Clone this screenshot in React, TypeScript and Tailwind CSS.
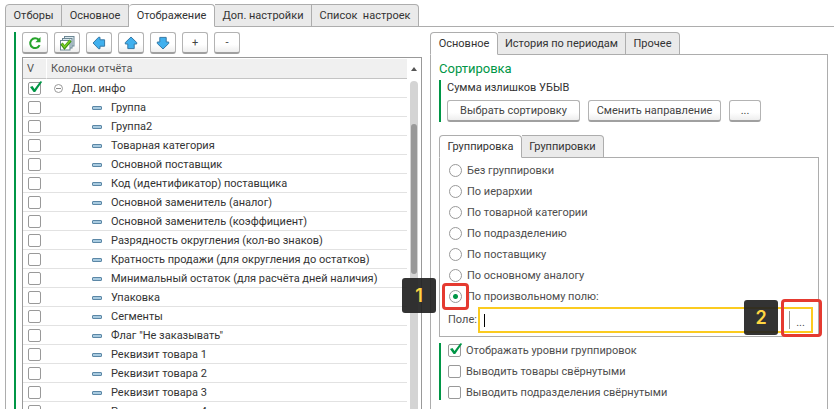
import { useState, type ReactNode } from 'react';

const columns = [
  'Группа',
  'Группа2',
  'Товарная категория',
  'Основной поставщик',
  'Код (идентификатор) поставщика',
  'Основной заменитель (аналог)',
  'Основной заменитель (коэффициент)',
  'Разрядность округления (кол-во знаков)',
  'Кратность продажи (для округления до остатков)',
  'Минимальный остаток (для расчёта дней наличия)',
  'Упаковка',
  'Сегменты',
  'Флаг "Не заказывать"',
  'Реквизит товара 1',
  'Реквизит товара 2',
  'Реквизит товара 3',
  'Реквизит товара 4',
];

const groupings = [
  'Без группировки',
  'По иерархии',
  'По товарной категории',
  'По подразделению',
  'По поставщику',
  'По основному аналогу',
  'По произвольному полю:',
];

function Tabs({ items, initial }: { items: { label: string; width: string }[]; initial: number }) {
  const [active, setActive] = useState(initial);
  return (
    <div role="tablist" className="flex h-[23px] border-b border-[#adadad]">
      {items.map((item, i) => (
        <button
          key={item.label}
          type="button"
          role="tab"
          aria-selected={active === i}
          onClick={() => setActive(i)}
          className={`-mb-px shrink-0 whitespace-pre border border-[#adadad] text-center text-[#333] not-first:border-l-0 first:rounded-tl last:rounded-tr ${item.width} ${
            active === i ? 'rounded-t border-b-white bg-white' : 'bg-[#eaeaea]'
          }`}
        >
          {item.label}
        </button>
      ))}
    </div>
  );
}

function PushButton({ label, className, children }: { label?: string; className: string; children: ReactNode }) {
  return (
    <button
      type="button"
      aria-label={label}
      className={`flex h-[22px] items-center justify-center rounded-[3px] border border-b-2 border-[#b3b3b3] border-b-[#a0a0a0] bg-linear-to-b from-white from-60% to-[#eeeeee] text-[#444] ${className}`}
    >
      {children}
    </button>
  );
}

function Check({ id, label, checked = false }: { id?: string; label?: string; checked?: boolean }) {
  const [on, setOn] = useState(checked);
  return (
    <span className="relative block size-[13px] shrink-0">
      <input
        id={id}
        type="checkbox"
        aria-label={label}
        checked={on}
        onChange={() => setOn(!on)}
        className="block size-[13px] appearance-none rounded-xs border border-[#999] bg-white"
      />
      {on && (
        <svg viewBox="0 0 15 15" className="pointer-events-none absolute -top-px left-0 size-[15px]" aria-hidden="true">
          <path d="M2 6 4.5 5 6.5 8 12.3 0.3 14.2 0.8 7.2 11 5.6 11Z" fill="#009646" />
        </svg>
      )}
    </span>
  );
}

function Arrow({ turn }: { turn: string }) {
  return (
    <svg viewBox="0 0 14 14" className={`size-[14px] ${turn}`} aria-hidden="true">
      <path d="M7 1 12.7 6.5V8H10.2V12.6H3.8V8H1.3V6.5Z" fill="#40b0ee" stroke="#3779a5" strokeWidth="1" strokeLinejoin="round" />
    </svg>
  );
}

function Toolbar() {
  return (
    <div className="flex gap-1.5">
      <PushButton label="Обновить" className="w-[26px]">
        <svg viewBox="0 0 14 14" className="size-[14px]" aria-hidden="true">
          <path d="M10.7 3.8A4.9 4.9 0 1 0 11.6 9.2" fill="none" stroke="#26a32b" strokeWidth="2" />
          <path d="M12.5 1V6.2H7.3Z" fill="#26a32b" />
        </svg>
      </PushButton>
      <PushButton label="Отметить все" className="w-[26px]">
        <svg viewBox="0 0 16 16" className="size-4" aria-hidden="true">
          <g fill="#dbe9ef" stroke="#6d8794" strokeWidth="1">
            <rect x="5.5" y="1.5" width="9.5" height="9.5" />
            <rect x="3.5" y="3.5" width="9.5" height="9.5" />
            <rect x="1.5" y="5.5" width="9.5" height="9.5" fill="#fff" />
          </g>
          <path d="M2.5 8.5 5.5 12.5 11.5 5.5" fill="none" stroke="#398f12" strokeWidth="3" />
          <path d="M3 8.8 5.5 12 11.2 5.6" fill="none" stroke="#78ce22" strokeWidth="1.5" />
        </svg>
      </PushButton>
      <PushButton label="Влево" className="w-[26px]"><Arrow turn="-rotate-90" /></PushButton>
      <PushButton label="Вверх" className="w-[26px]"><Arrow turn="rotate-0" /></PushButton>
      <PushButton label="Вниз" className="w-[26px]"><Arrow turn="rotate-180" /></PushButton>
      <PushButton className="w-[26px]">+</PushButton>
      <PushButton className="w-[26px]">-</PushButton>
    </div>
  );
}

function ColumnList() {
  return (
    <div className="flex min-h-0 flex-1 border border-b-0 border-[#999] pt-px text-[#333]">
      <div className="min-w-0 flex-1 overflow-hidden">
        <table className="w-full table-fixed border-separate border-spacing-0">
          <thead>
            <tr className="h-5 text-left text-[#555]">
              <th className="w-6 border-r border-b border-r-white border-b-[#c4c4c4] bg-[#f0f0f0] px-1 font-normal">V</th>
              <th className="border-b border-[#c4c4c4] bg-[#f0f0f0] px-1 font-normal">Колонки отчёта</th>
            </tr>
          </thead>
          <tbody>
            <tr className="h-[19px]">
              <td className="border-b border-[#e2e2e2] p-0 pl-[5px]"><Check label="Доп. инфо" checked /></td>
              <td className="border-b border-[#e2e2e2] p-0">
                <div className="flex items-center pt-px pl-[7px]">
                  <svg viewBox="0 0 9 9" className="mr-[9px] size-[9px]" aria-hidden="true">
                    <circle cx="4.5" cy="4.5" r="4" fill="#fff" stroke="#999" />
                    <path d="M2 4.5H7" stroke="#888" />
                  </svg>
                  Доп. инфо
                </div>
              </td>
            </tr>
            {columns.map((name) => (
              <tr key={name} className="h-[19px]">
                <td className="border-b border-[#e2e2e2] p-0 pl-[5px]"><Check label={name} /></td>
                <td className="border-b border-[#e2e2e2] p-0">
                  <div className="flex items-center whitespace-nowrap pt-px pl-[45px]">
                    <span className="mr-[9px] h-1 w-[10px] rounded-[1px] border border-[#5b87a6] bg-[#a9cbe0]" />
                    {name}
                  </div>
                </td>
              </tr>
            ))}
          </tbody>
        </table>
      </div>
      <div className="mr-[3px] ml-[3px] flex w-2 shrink-0 flex-col items-center">
        <svg viewBox="0 0 6 4" className="mt-2 mb-[10px] h-1 w-1.5 shrink-0" aria-hidden="true">
          <path d="M3 0 6 4H0Z" fill="#555" />
        </svg>
        <div className="w-full flex-1 rounded-t bg-[#d4d4d4] px-px pt-[43px]">
          <div className="h-[150px] rounded-full bg-[#999]" />
        </div>
      </div>
    </div>
  );
}

function Marker({ text, className }: { text: string; className: string }) {
  return (
    <span
      className={`pointer-events-none absolute flex h-[35px] w-[34px] items-center justify-center rounded-[3px] bg-[#222]/92 font-[Inter,sans-serif] text-[18px] font-semibold text-[#ffd642] ${className}`}
    >
      {text}
    </span>
  );
}

function GroupingPanel() {
  const [selected, setSelected] = useState(6);
  return (
    <section className="mt-[13px]">
      <Tabs
        initial={0}
        items={[
          { label: 'Группировка', width: 'w-[83px]' },
          { label: 'Группировки', width: 'w-[82px]' },
        ]}
      />
      <div className="border border-t-0 border-[#adadad] px-[5px] pt-0.5 pb-[3px] text-[#4d4d4d]">
        <fieldset aria-label="Группировка" className="pl-1">
          {groupings.map((name, i) => (
            <div key={name} className="relative flex h-[21px] items-center gap-[5px]">
              <input
                id={`grouping-${i}`}
                type="radio"
                name="grouping"
                checked={selected === i}
                onChange={() => setSelected(i)}
                className="size-[13px] appearance-none rounded-full border border-[#999] bg-white checked:bg-[radial-gradient(circle,#009646_0_2px,white_3px)]"
              />
              <label htmlFor={`grouping-${i}`}>{name}</label>
              {i === 6 && (
                <>
                  <span className="pointer-events-none absolute -top-[3px] -left-[7px] size-[27px] rounded border-3 border-[#e53a30]" />
                  <Marker text="1" className="-top-2 -left-[47px]" />
                </>
              )}
            </div>
          ))}
        </fieldset>
        <div className="flex items-center">
          <label htmlFor="field" className="w-[33px] shrink-0 pl-[3px]">Поле:</label>
          <div className="relative flex h-[26px] flex-1 items-center border-2 border-[#fbcb20] bg-white">
            <span className="ml-1 h-[13px] w-px bg-black" />
            <input id="field" type="text" className="h-full min-w-0 flex-1 outline-none" />
            <button type="button" aria-label="Выбрать поле" className="h-[18px] w-[22px] border-l border-[#999] pt-1">...</button>
            <span className="pointer-events-none absolute -top-[10px] -right-[11px] h-[38px] w-[41px] rounded border-3 border-[#e53a30]" />
            <Marker text="2" className="-top-[9px] right-[33px]" />
          </div>
        </div>
      </div>
    </section>
  );
}

function Options() {
  const items = ['Отображать уровни группировок', 'Выводить товары свёрнутыми', 'Выводить подразделения свёрнутыми'];
  return (
    <div className="mt-1.5 flex h-[57px] flex-col justify-between border-l-2 border-[#009646] pl-[7px] text-[#4d4d4d]">
      {items.map((name, i) => (
        <div key={name} className="flex h-[15px] items-center gap-[5px]">
          <Check id={`option-${i}`} checked={i === 0} />
          <label htmlFor={`option-${i}`}>{name}</label>
        </div>
      ))}
    </div>
  );
}

export default function App() {
  return (
    <main className="flex h-screen flex-col overflow-hidden bg-white pt-1 pl-[5px] font-[Roboto,'Liberation_Sans',sans-serif] text-[11px] leading-4 text-[#333]">
      <Tabs
        initial={2}
        items={[
          { label: 'Отборы', width: 'w-[57px]' },
          { label: 'Основное', width: 'w-[67px]' },
          { label: 'Отображение', width: 'w-[86px]' },
          { label: 'Доп. настройки', width: 'w-[97px]' },
          { label: 'Список  настроек', width: 'w-[107px]' },
        ]}
      />
      <div className="flex min-h-0 flex-1 border-l border-[#adadad] pt-[5px] pr-1.5 pl-2">
        <div className="mr-1.5 w-0.5 shrink-0 bg-[#009646]" />
        <div className="grid min-h-0 min-w-0 flex-1 grid-cols-[400fr_398fr] gap-2">
          <div className="flex min-h-0 min-w-0 flex-col gap-[3px]">
            <Toolbar />
            <ColumnList />
          </div>
          <div className="flex min-h-0 min-w-0 flex-col">
            <Tabs
              initial={0}
              items={[
                { label: 'Основное', width: 'w-[68px]' },
                { label: 'История по периодам', width: 'w-[128px]' },
                { label: 'Прочее', width: 'w-[54px]' },
              ]}
            />
            <div className="min-h-0 flex-1 border-x border-[#adadad] pt-1 pr-2 pl-2">
              <h2 className="text-[13px] leading-5 text-[#009646]">Сортировка</h2>
              <div className="mt-px h-[42px] border-l-2 border-[#009646] pl-1.5">
                <p>Сумма излишков УБЫВ</p>
                <div className="mt-1 flex gap-2">
                  <PushButton className="w-[133px]">Выбрать сортировку</PushButton>
                  <PushButton className="w-[133px]">Сменить направление</PushButton>
                  <PushButton className="w-8">...</PushButton>
                </div>
              </div>
              <GroupingPanel />
              <Options />
            </div>
          </div>
        </div>
      </div>
    </main>
  );
}
